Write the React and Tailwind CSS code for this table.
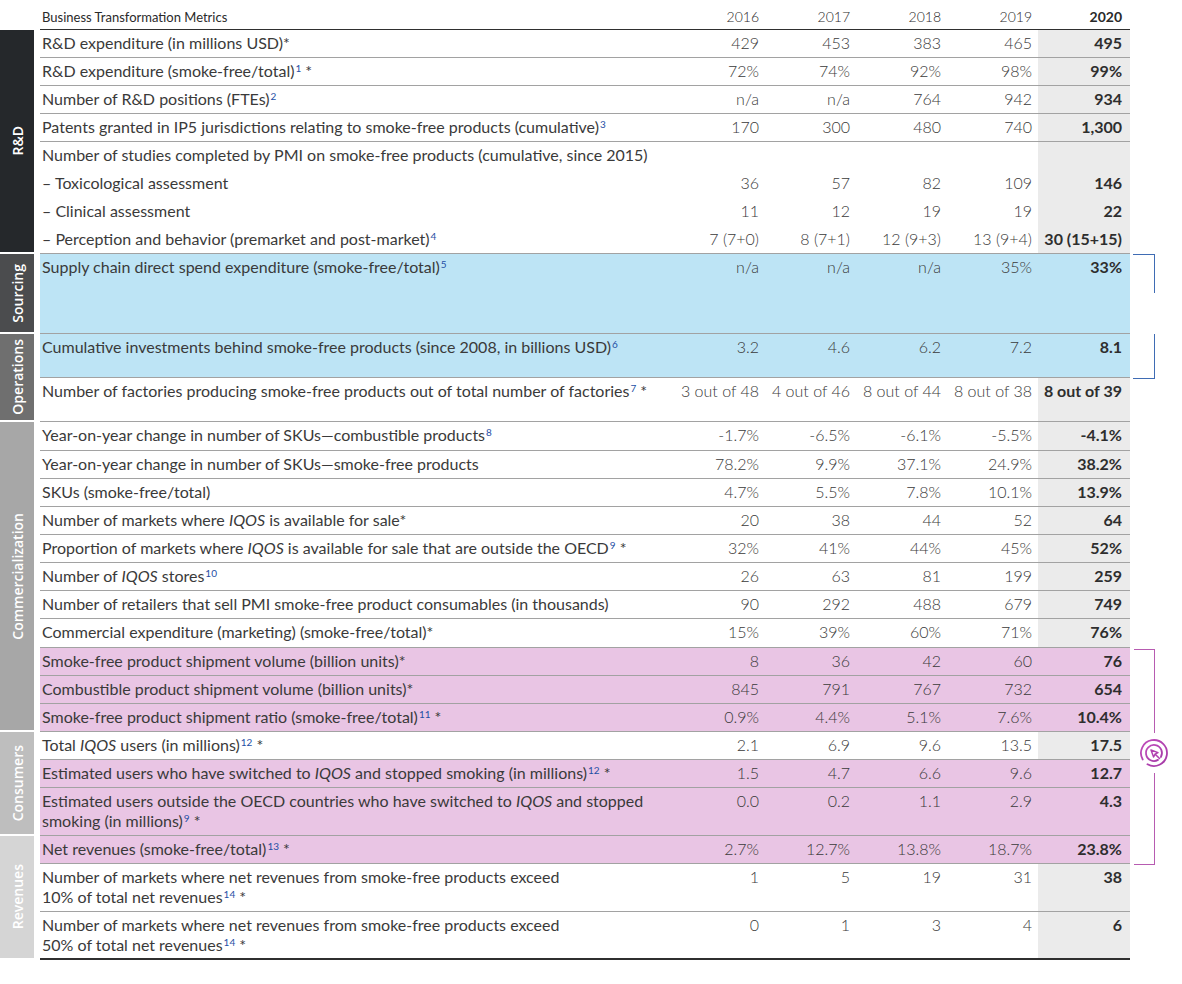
import React from "react";

const Sup = ({ n }) => (
  <sup className="text-[10px] text-[#1f4fa5] ml-[1px] font-normal">{n}</sup>
);
const I = ({ children }) => <i className="italic">{children}</i>;

const sections = [
  {
    name: "R&D",
    color: "bg-[#25282b]",
    rows: [
      { label: <>R&amp;D expenditure (in millions USD)*</>, v: ["429", "453", "383", "465", "495"] },
      { label: <>R&amp;D expenditure (smoke-free/total)<Sup n="1" /> *</>, v: ["72%", "74%", "92%", "98%", "99%"] },
      { label: <>Number of R&amp;D positions (FTEs)<Sup n="2" /></>, v: ["n/a", "n/a", "764", "942", "934"] },
      { label: <>Patents granted in IP5 jurisdictions relating to smoke-free products (cumulative)<Sup n="3" /></>, v: ["170", "300", "480", "740", "1,300"] },
      { label: <>Number of studies completed by PMI on smoke-free products (cumulative, since 2015)</>, v: ["", "", "", "", ""], nb: true },
      { label: <>– Toxicological assessment</>, v: ["36", "57", "82", "109", "146"], nb: true },
      { label: <>– Clinical assessment</>, v: ["11", "12", "19", "19", "22"], nb: true },
      { label: <>– Perception and behavior (premarket and post-market)<Sup n="4" /></>, v: ["7 (7+0)", "8 (7+1)", "12 (9+3)", "13 (9+4)", "30 (15+15)"] },
    ],
  },
  {
    name: "Sourcing",
    color: "bg-[#4b4c4e]",
    rows: [
      { label: <>Supply chain direct spend expenditure (smoke-free/total)<Sup n="5" /></>, v: ["n/a", "n/a", "n/a", "35%", "33%"], bg: "blue", h: "h-[80px]" },
    ],
  },
  {
    name: "Operations",
    color: "bg-[#6f6f6f]",
    rows: [
      { label: <>Cumulative investments behind smoke-free products (since 2008, in billions USD)<Sup n="6" /></>, v: ["3.2", "4.6", "6.2", "7.2", "8.1"], bg: "blue", h: "h-[44px]" },
      { label: <>Number of factories producing smoke-free products out of total number of factories<Sup n="7" /> *</>, v: ["3 out of 48", "4 out of 46", "8 out of 44", "8 out of 38", "8 out of 39"], h: "h-[44px]" },
    ],
  },
  {
    name: "Commercialization",
    color: "bg-[#a7a7a7]",
    rows: [
      { label: <>Year-on-year change in number of SKUs—combustible products<Sup n="8" /></>, v: ["-1.7%", "-6.5%", "-6.1%", "-5.5%", "-4.1%"], h: "h-[29px]" },
      { label: <>Year-on-year change in number of SKUs—smoke-free products</>, v: ["78.2%", "9.9%", "37.1%", "24.9%", "38.2%"] },
      { label: <>SKUs (smoke-free/total)</>, v: ["4.7%", "5.5%", "7.8%", "10.1%", "13.9%"] },
      { label: <>Number of markets where <I>IQOS</I> is available for sale*</>, v: ["20", "38", "44", "52", "64"] },
      { label: <>Proportion of markets where <I>IQOS</I> is available for sale that are outside the OECD<Sup n="9" /> *</>, v: ["32%", "41%", "44%", "45%", "52%"] },
      { label: <>Number of <I>IQOS</I> stores<Sup n="10" /></>, v: ["26", "63", "81", "199", "259"] },
      { label: <>Number of retailers that sell PMI smoke-free product consumables (in thousands)</>, v: ["90", "292", "488", "679", "749"] },
      { label: <>Commercial expenditure (marketing) (smoke-free/total)*</>, v: ["15%", "39%", "60%", "71%", "76%"], h: "h-[29px]" },
      { label: <>Smoke-free product shipment volume (billion units)*</>, v: ["8", "36", "42", "60", "76"], bg: "pink" },
      { label: <>Combustible product shipment volume (billion units)*</>, v: ["845", "791", "767", "732", "654"], bg: "pink" },
      { label: <>Smoke-free product shipment ratio (smoke-free/total)<Sup n="11" /> *</>, v: ["0.9%", "4.4%", "5.1%", "7.6%", "10.4%"], bg: "pink" },
    ],
  },
  {
    name: "Consumers",
    color: "bg-[#bebebe]",
    rows: [
      { label: <>Total <I>IQOS</I> users (in millions)<Sup n="12" /> *</>, v: ["2.1", "6.9", "9.6", "13.5", "17.5"] },
      { label: <>Estimated users who have switched to <I>IQOS</I> and stopped smoking (in millions)<Sup n="12" /> *</>, v: ["1.5", "4.7", "6.6", "9.6", "12.7"], bg: "pink" },
      { label: <>Estimated users outside the OECD countries who have switched to <I>IQOS</I> and stopped<br />smoking (in millions)<Sup n="9" /> *</>, v: ["0.0", "0.2", "1.1", "2.9", "4.3"], bg: "pink", h: "h-[48px]" },
    ],
  },
  {
    name: "Revenues",
    color: "bg-[#d5d5d5]",
    rows: [
      { label: <>Net revenues (smoke-free/total)<Sup n="13" /> *</>, v: ["2.7%", "12.7%", "13.8%", "18.7%", "23.8%"], bg: "pink" },
      { label: <>Number of markets where net revenues from smoke-free products exceed<br />10% of total net revenues<Sup n="14" /> *</>, v: ["1", "5", "19", "31", "38"], h: "h-[48px]" },
      { label: <>Number of markets where net revenues from smoke-free products exceed<br />50% of total net revenues<Sup n="14" /> *</>, v: ["0", "1", "3", "4", "6"], h: "h-[48px]", last: true },
    ],
  },
];

function Row({ r }) {
  const bg = r.bg === "blue" ? "bg-[#bde4f5]" : r.bg === "pink" ? "bg-[#e9c5e4]" : "bg-white";
  const lastBg = r.bg === "blue" ? "bg-[#bde4f5]" : r.bg === "pink" ? "bg-[#e9c5e4]" : "bg-[#ebebeb]";
  const border = r.last
    ? "border-b-[2px] border-[#2f2f2f]"
    : r.nb
    ? ""
    : "border-b border-[#a2a2a2]";
  return (
    <div className={`grid grid-cols-[1fr_91px_91px_91px_91px_92px] ${r.h || "h-[28px]"} ${bg} ${border}`}>
      <div className="pl-[2px] pt-[3px] leading-[20px] text-[16px] text-[#3a3a3a]">{r.label}</div>
      {r.v.slice(0, 4).map((x, i) => (
        <div key={i} className="text-right pr-[6px] pt-[3px] leading-[20px] text-[16px] font-light text-[#3a3a3a] whitespace-nowrap">
          {x}
        </div>
      ))}
      <div className={`text-right pr-[8px] pt-[3px] leading-[20px] text-[16px] font-bold text-[#2e2e2e] whitespace-nowrap ${lastBg}`}>
        {r.v[4]}
      </div>
    </div>
  );
}

function Section({ s }) {
  return (
    <div className="flex">
      <div className="w-[40px] shrink-0 flex">
        <div className={`w-[34px] mb-[2px] flex items-center justify-center ${s.color}`}>
          <span className="[writing-mode:vertical-rl] rotate-180 text-white text-[14px] font-semibold whitespace-nowrap" style={{ fontFamily: '"Open Sans", sans-serif' }}>
            {s.name}
          </span>
        </div>
      </div>
      <div className="flex-1">
        {s.rows.map((r, i) => (
          <Row key={i} r={r} />
        ))}
      </div>
    </div>
  );
}

function Icon() {
  return (
    <svg width="32" height="32" viewBox="0 0 32 32" fill="none" strokeLinecap="round" strokeLinejoin="round">
      <defs>
        <linearGradient id="g" x1="0" y1="0" x2="1" y2="1">
          <stop offset="0" stopColor="#c04cbb" />
          <stop offset="1" stopColor="#a43aa6" />
        </linearGradient>
      </defs>
      <path d="M4.7 22.5 A13 13 0 1 1 9.5 27.3" stroke="url(#g)" strokeWidth="1.8" />
      <path d="M20 22.9 A8 8 0 1 1 22.9 20" stroke="url(#g)" strokeWidth="1.8" />
      <path d="M13 13 L20 15.6 L17.2 17.2 L15.6 20 Z" stroke="#b142b0" strokeWidth="1.5" fill="none" />
      <path d="M17.2 17.2 L21.5 21.5" stroke="#b142b0" strokeWidth="1.6" />
    </svg>
  );
}

export default function App() {
  return (
    <div className="relative w-[1182px] h-[984px] bg-white" style={{ fontFamily: 'Lato, "Open Sans", sans-serif' }}>
      <div className="w-[1130px]">
        <div className="flex">
          <div className="w-[40px] shrink-0" />
          <div className="flex-1 grid grid-cols-[1fr_91px_91px_91px_91px_92px] h-[30px] border-b border-[#2f2f2f] items-end pb-[3px] text-[#2a2a2a]">
            <div className="pl-[2px] text-[13px] leading-[18px]">Business Transformation Metrics</div>
            {["2016", "2017", "2018", "2019"].map((y) => (
              <div key={y} className="text-right pr-[6px] text-[14px] leading-[18px] font-light">{y}</div>
            ))}
            <div className="text-right pr-[8px] text-[14px] leading-[18px] font-bold">2020</div>
          </div>
        </div>
        {sections.map((s) => (
          <Section key={s.name} s={s} />
        ))}
      </div>

      {/* Blue brackets */}
      <div className="absolute left-[1133px] top-[254px] w-[22px] h-[39px] border-t border-r border-[#3f6cb4]" />
      <div className="absolute left-[1133px] top-[334px] w-[22px] h-[45px] border-b border-r border-[#3f6cb4]" />

      {/* Pink bracket */}
      <div className="absolute left-[1134px] top-[649px] w-[21px] h-[84px] border-t border-r border-[#b75bb1]" />
      <div className="absolute left-[1134px] top-[773px] w-[21px] h-[92px] border-b border-r border-[#b75bb1]" />
      <div className="absolute left-[1138px] top-[737px]">
        <Icon />
      </div>
    </div>
  );
}
